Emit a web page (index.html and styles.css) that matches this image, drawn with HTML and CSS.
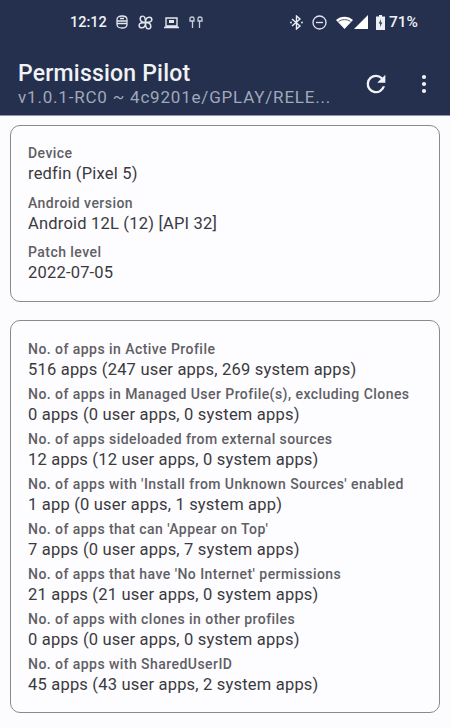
FILE: index.html
```html
<!DOCTYPE html>
<html lang="en">
<head>
	<meta charset="UTF-8">
	<title>Permission Pilot</title>
	<link rel="stylesheet" href="styles.css">
</head>
<body>
	<div class="top">
		<div class="status">
			<div class="status-left">
				<span class="clock">12:12</span>
				<svg class="ico" width="12" height="14" viewBox="0 0 12 14" fill="none" stroke="#e4e7ef" stroke-width="1.3"><path d="M1 4.500C1 2.500 3 1 6 1s5 1.500 5 3.500v5c0 2-2 3.500-5 3.500s-5-1.500-5-3.500zM1 6h10M4 3.500h4M1 8.500h10"/></svg>
				<svg class="ico" width="17" height="17" viewBox="0 0 16 16" fill="none" stroke="#e4e7ef" stroke-width="1.400"><path d="M8 8C5 8 3 7 3 4.500 3 3 4 2 5.500 2 7 2 8 3.500 8 8zM8 8c0-3 1-5 3.500-5C13 3 14 4 14 5.500 14 7 12.500 8 8 8zM8 8c3 0 5 1 5 3.500 0 1.500-1 2.500-2.500 2.500C9 14 8 12.500 8 8zM8 8c0 3-1 5-3.500 5C3 13 2 12 2 10.500 2 9 3.500 8 8 8z"/></svg>
				<svg class="ico" width="17" height="13" viewBox="0 0 17 13" fill="none" stroke="#e4e7ef" stroke-width="1.400"><path d="M3 2h11v8H3zM1 11.500h15"/><rect x="6" y="4" width="5" height="3" fill="#e4e7ef" stroke="none"/></svg>
				<svg class="ico" width="14" height="13" viewBox="0 0 14 13" fill="none" stroke="#c9cedb" stroke-width="1.300"><path d="M1 2.500C1 .5 5 .5 5 2.500V5H3.500v7M13 2.500C13 .5 9 .5 9 2.500V5h1.500v7M1 2.500V5h2.500M13 2.500V5h-2.500"/></svg>
			</div>
			<div class="status-right">
				<svg class="ico" width="13" height="15" viewBox="0 0 13 15" fill="none" stroke="#eceef4" stroke-width="1.400"><path d="M2 4l8 7-3.500 3V1L10 4l-8 7"/><circle cx="1" cy="7.500" r=".9" fill="#eceef4" stroke="none"/><circle cx="12" cy="7.500" r=".9" fill="#eceef4" stroke="none"/></svg>
				<svg class="ico" width="15" height="15" viewBox="0 0 15 15" fill="none" stroke="#e4e7ef" stroke-width="1.300"><circle cx="7.500" cy="7.500" r="6.500"/><path d="M4 7.500h7"/></svg>
				<svg class="ico wifi" width="17" height="13" viewBox="0 0 17 13"><path d="M0 4C4.500-.5 12.500-.5 17 4l-8.500 9z" fill="#fff"/><path d="M2.500 5.500c3.500-2.500 8.500-2.500 12 0" fill="none" stroke="#24304e" stroke-width=".8"/></svg>
				<svg class="ico signal" width="14" height="14" viewBox="0 0 14 14"><path d="M14 0v14H0z" fill="#fff"/></svg>
				<svg class="ico batt" width="9" height="15" viewBox="0 0 9 15"><path d="M3 0h3v1.500h3V15H0V1.500h3z" fill="#eceef4"/><path d="M5 4L2.800 8.500h1.500L4 12l2.300-4.500H4.700z" fill="#24304e"/></svg>
				<span class="pct">71%</span>
			</div>
		</div>
		<div class="appbar">
			<div class="titles">
				<div class="title">Permission Pilot</div>
				<div class="subtitle">v1.0.1-RC0 ~ 4c9201e/GPLAY/RELE...</div>
			</div>
			<svg class="refresh" width="28" height="28" viewBox="0 0 24 24"><path d="M17.650 6.350A7.960 7.960 0 0 0 12 4a8 8 0 1 0 7.730 10h-2.080A6 6 0 1 1 12 6c1.660 0 3.140.69 4.220 1.780L13 11h7V4z" fill="#f1f2f5"/></svg>
			<svg class="more" width="6" height="20" viewBox="0 0 6 20"><circle cx="3" cy="3" r="2.100" fill="#f1f2f5"/><circle cx="3" cy="10" r="2.100" fill="#f1f2f5"/><circle cx="3" cy="17" r="2.100" fill="#f1f2f5"/></svg>
		</div>
	</div>

	<div class="content">
		<div class="card device">
			<div class="item">
				<p class="label">Device</p>
				<p class="value">redfin (Pixel 5)</p>
			</div>
			<div class="item">
				<p class="label">Android version</p>
				<p class="value">Android 12L (12) [API 32]</p>
			</div>
			<div class="item">
				<p class="label">Patch level</p>
				<p class="value">2022-07-05</p>
			</div>
		</div>

		<div class="card apps">
			<div class="item">
				<p class="label">No. of apps in Active Profile</p>
				<p class="value">516 apps (247 user apps, 269 system apps)</p>
			</div>
			<div class="item">
				<p class="label">No. of apps in Managed User Profile(s), excluding Clones</p>
				<p class="value">0 apps (0 user apps, 0 system apps)</p>
			</div>
			<div class="item">
				<p class="label">No. of apps sideloaded from external sources</p>
				<p class="value">12 apps (12 user apps, 0 system apps)</p>
			</div>
			<div class="item">
				<p class="label">No. of apps with 'Install from Unknown Sources' enabled</p>
				<p class="value">1 app (0 user apps, 1 system app)</p>
			</div>
			<div class="item">
				<p class="label">No. of apps that can 'Appear on Top'</p>
				<p class="value">7 apps (0 user apps, 7 system apps)</p>
			</div>
			<div class="item">
				<p class="label">No. of apps that have 'No Internet' permissions</p>
				<p class="value">21 apps (21 user apps, 0 system apps)</p>
			</div>
			<div class="item">
				<p class="label">No. of apps with clones in other profiles</p>
				<p class="value">0 apps (0 user apps, 0 system apps)</p>
			</div>
			<div class="item">
				<p class="label">No. of apps with SharedUserID</p>
				<p class="value">45 apps (43 user apps, 2 system apps)</p>
			</div>
		</div>
	</div>
</body>
</html>
```

FILE: styles.css
```css
* {
	margin: 0;
	padding: 0;
	box-sizing: border-box;
}
html, body {
	height: 728px;
	overflow: hidden;
}
body {
	background-color: #fcfbfe;
	font-family: Roboto, "Liberation Sans", sans-serif;
}
.top {
	height: 116px;
	background-color: #24304e;
	border-bottom: 1px solid #8f95a6;
}
.status {
	height: 44px;
	display: flex;
	justify-content: space-between;
	align-items: center;
	padding: 0 32px 0 70px;
	color: #eef0f5;
	font-size: 14.500px;
	font-weight: 500;
}
.status-left, .status-right {
	display: flex;
	align-items: center;
	gap: 9px;
}
.pct {
	font-size: 15.500px;
}
.wifi {
	margin-right: -8px;
}
.batt {
	margin-left: -1px;
	margin-right: -5px;
}
.appbar {
	display: flex;
	align-items: center;
	padding: 16px 23px 0 18px;
}
.titles {
	flex: 1;
	min-width: 0;
}
.title {
	color: #f1f2f5;
	font-size: 23px;
	font-weight: 500;
	line-height: 27px;
	letter-spacing: .2px;
}
.subtitle {
	color: #a1a8ba;
	font-size: 17px;
	line-height: 20px;
	letter-spacing: .8px;
	white-space: nowrap;
}
.refresh {
	margin-right: 31px;
}
.content {
	padding: 9px 10px 0 10px;
}
.card {
	border: 1px solid #8a8a8e;
	border-radius: 10px;
	padding: 19px 17px 0 17px;
	background-color: #fdfcff;
}
.device {
	height: 177px;
	margin-bottom: 18px;
}
.device .item {
	height: 49.500px;
}
.apps {
	height: 393px;
	padding-top: 20px;
}
.apps .item {
	height: 45px;
}
.label {
	color: #5f6064;
	font-size: 14px;
	font-weight: 500;
	line-height: 17px;
	letter-spacing: .45px;
}
.value {
	color: #3a3a3e;
	font-size: 16.500px;
	line-height: 24px;
	letter-spacing: .2px;
}
```
